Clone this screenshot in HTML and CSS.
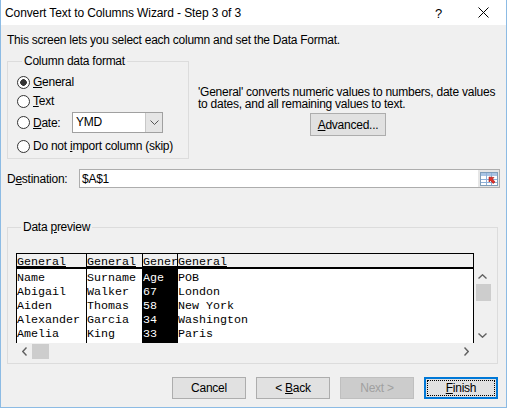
FILE: index.html
```html
<!DOCTYPE html>
<html lang="en">
<head>
  <meta charset="UTF-8" />
  <title>Convert Text to Columns Wizard - Step 3 of 3</title>
  <link rel="stylesheet" href="styles.css">
</head>
<body>
<div class="window">

  <!-- Title bar -->
  <div class="titlebar">
    <span class="title">Convert Text to Columns Wizard - Step 3 of 3</span>
    <span class="caption-btn help">?</span>
    <span class="caption-btn">
      <svg width="11" height="11" viewBox="0 0 11 11"><path d="M0.5 0.5 L10.5 10.5 M10.5 0.5 L0.5 10.5" stroke="#000" stroke-width="1" fill="none"/></svg>
    </span>
  </div>

  <div class="content">
    <p class="intro">This screen lets you select each column and set the Data Format.</p>

    <!-- Column data format -->
    <div class="format-row">
      <fieldset class="group format-group">
        <legend>Column data format</legend>
        <div class="opt"><span class="radio checked"></span><span><u>G</u>eneral</span></div>
        <div class="opt opt-text"><span class="radio"></span><span><u>T</u>ext</span></div>
        <div class="opt opt-date">
          <span class="radio"></span>
          <span class="date-label"><u>D</u>ate:</span>
          <div class="combo">
            <span class="combo-value">YMD</span>
            <span class="combo-btn">
              <svg width="9" height="5" viewBox="0 0 9 5"><polyline points="0.5,0.5 4.5,4.5 8.5,0.5" stroke="#555" stroke-width="1" fill="none"/></svg>
            </span>
          </div>
        </div>
        <div class="opt opt-skip"><span class="radio"></span><span>Do not <u>i</u>mport column (skip)</span></div>
      </fieldset>

      <div class="format-help">
        <p>'General' converts numeric values to numbers, date values<br>to dates, and all remaining values to text.</p>
        <button class="btn btn-advanced"><u>A</u>dvanced...</button>
      </div>
    </div>

    <!-- Destination -->
    <div class="dest-row">
      <span class="dest-label">D<u>e</u>stination:</span>
      <div class="dest-input">
        <span class="dest-value">$A$1</span>
        <span class="ref-btn">
          <svg width="18" height="14" viewBox="0 0 18 14">
            <rect x="0.5" y="0.5" width="17" height="13" fill="#fff" stroke="#7f9db9"/>
            <rect x="1" y="1" width="16" height="3" fill="#a9c4e4"/>
            <path d="M1 7.5 H17 M1 10.5 H17 M6.5 1 V13 M11.5 1 V13" stroke="#8fb0d8" stroke-width="1"/>
            <path d="M9 5 L9 10 L10.5 8.5 L13 11.5 L15 10 L12.5 7 L14 5.5 Z" fill="#e0302a" stroke="#a01810" stroke-width="0.6"/>
          </svg>
        </span>
      </div>
    </div>

    <!-- Data preview -->
    <fieldset class="group preview-group">
      <legend>Data <u>p</u>review</legend>
      <div class="preview">
        <div class="ptable">
          <div class="pcol col-1">
            <div class="phead"><u>General</u></div>
            <div class="pbody">
              <div>Name</div><div>Abigail</div><div>Aiden</div><div>Alexander</div><div>Amelia</div>
            </div>
          </div>
          <div class="pcol col-2">
            <div class="phead"><u>General</u></div>
            <div class="pbody">
              <div>Surname</div><div>Walker</div><div>Thomas</div><div>Garcia</div><div>King</div>
            </div>
          </div>
          <div class="pcol col-3 selected">
            <div class="phead"><u>Gener</u></div>
            <div class="pbody">
              <div>Age</div><div>67</div><div>58</div><div>34</div><div>33</div>
            </div>
          </div>
          <div class="pcol col-4">
            <div class="phead"><u>General</u></div>
            <div class="pbody">
              <div>POB</div><div>London</div><div>New York</div><div>Washington</div><div>Paris</div>
            </div>
          </div>
        </div>

        <div class="vscroll">
          <span class="arrow">
            <svg width="9" height="5" viewBox="0 0 9 5"><polyline points="0.5,4.5 4.5,0.8 8.5,4.5" stroke="#606060" stroke-width="1.4" fill="none"/></svg>
          </span>
          <span class="thumb"></span>
          <span class="track"></span>
          <span class="arrow">
            <svg width="9" height="5" viewBox="0 0 9 5"><polyline points="0.5,0.5 4.5,4.2 8.5,0.5" stroke="#606060" stroke-width="1.4" fill="none"/></svg>
          </span>
        </div>

        <div class="hscroll">
          <span class="arrow">
            <svg width="5" height="9" viewBox="0 0 5 9"><polyline points="4.5,0.5 0.8,4.5 4.5,8.5" stroke="#606060" stroke-width="1.4" fill="none"/></svg>
          </span>
          <span class="thumb"></span>
          <span class="track"></span>
          <span class="arrow">
            <svg width="5" height="9" viewBox="0 0 5 9"><polyline points="0.5,0.5 4.2,4.5 0.5,8.5" stroke="#606060" stroke-width="1.4" fill="none"/></svg>
          </span>
        </div>
      </div>
    </fieldset>

    <!-- Wizard buttons -->
    <div class="buttons">
      <button class="btn">Cancel</button>
      <button class="btn">&lt; <u>B</u>ack</button>
      <button class="btn" disabled>Next &gt;</button>
      <button class="btn btn-default"><u>F</u>inish</button>
    </div>
  </div>
</div>
</body>
</html>
```

FILE: styles.css
```css
* { box-sizing: border-box; }
body {
  margin: 0;
  font-family: 'Liberation Sans', Arial, sans-serif;
  font-size: 12px;
  letter-spacing: -0.25px;
  color: #000;
  background: #f0f0f0;
}
p { margin: 0; }

.window {
  width: 507px;
  height: 408px;
  border: 1px solid #8cbbe4;
  border-top: none;
  background: #f0f0f0;
}

/* title bar */
.titlebar {
  height: 25px;
  background: #fff;
  display: flex;
  align-items: center;
  padding-left: 4px;
}
.title { flex: 1; letter-spacing: -0.1px; }
.caption-btn {
  width: 45px;
  height: 25px;
  display: flex;
  align-items: center;
  justify-content: center;
}
.help { font-size: 13px; padding-top: 1px; }

.content { padding: 0 8px 0 6px; }
.intro { margin-top: 7px; line-height: 16px; }

/* group boxes */
.group {
  margin: 0;
  border: 1px solid #dcdcdc;
  min-width: 0;
}
.group legend {
  padding: 0 2px;
  margin-left: 5px;
  line-height: 16px;
}

.format-row { display: flex; margin-top: 5px; }
.format-group {
  width: 182px;
  padding: 5px 0 4px 9px;
}
.opt {
  display: flex;
  align-items: center;
  height: 16px;
  line-height: 16px;
  white-space: nowrap;
}
.opt-text, .opt-date { margin-top: 3px; }
.opt-date { height: 21px; }
.opt-skip { margin-top: 5px; }
.radio {
  width: 13px;
  height: 13px;
  border: 1px solid #333;
  border-radius: 50%;
  background: #fff;
  margin-right: 3px;
  flex-shrink: 0;
}
.radio.checked { background: radial-gradient(circle, #333 0 3px, #fff 3.6px); }
.date-label { width: 39px; }
.combo {
  width: 91px;
  height: 21px;
  display: flex;
  border: 1px solid #a0a0a0;
  background: #fff;
}
.combo-value { flex: 1; padding-left: 3px; line-height: 19px; }
.combo-btn {
  width: 17px;
  background: #e5e5e5;
  border-left: 1px solid #c8c8c8;
  display: flex;
  align-items: center;
  justify-content: center;
}

.format-help {
  flex: 1;
  margin-left: 9px;
  margin-top: 33px;
  display: flex;
  flex-direction: column;
  align-items: center;
}
.format-help p { line-height: 12px; align-self: flex-start; white-space: nowrap; }

.btn {
  width: 74px;
  height: 22px;
  padding: 0;
  font: inherit;
  letter-spacing: inherit;
  color: #000;
  background: #e1e1e1;
  border: 1px solid #adadad;
}
.btn-advanced { width: 76px; height: 23px; margin-top: 3px; }
.btn:disabled { background: #cccccc; border-color: #bfbfbf; color: #a0a0a0; }
.btn-default {
  border: 2px solid #0078d7;
  outline: 1px dotted #000;
  outline-offset: -4px;
}

/* destination */
.dest-row {
  display: flex;
  align-items: center;
  margin-top: 10px;
  margin-right: -2px;
}
.dest-label { width: 72px; }
.dest-input {
  flex: 1;
  height: 19px;
  display: flex;
  align-items: center;
  border: 1px solid #adadad;
  background: #fff;
}
.dest-value { flex: 1; padding-left: 2px; }
.ref-btn {
  width: 21px;
  height: 17px;
  display: flex;
  align-items: center;
  justify-content: center;
  background: #e6e6e6;
}

/* data preview */
.preview-group {
  margin-top: 31px;
  padding: 0 6px 4px 8px;
}
.preview {
  display: grid;
  grid-template-columns: 458px 17px;
  grid-template-rows: 90px 16px;
  margin-top: 18px;
}
.ptable {
  display: flex;
  border: 1px solid #000;
  border-bottom: none;
  background: #fff;
  font-family: 'Liberation Mono', 'Courier New', monospace;
  font-size: 11.67px;
  letter-spacing: 0;
}
.pcol {
  display: flex;
  flex-direction: column;
  border-left: 1px solid #000;
  white-space: nowrap;
  overflow: hidden;
}
.col-1 { width: 69px; border-left: none; }
.col-2 { width: 56px; }
.col-3 { width: 35px; }
.col-4 { flex: 1; }
.phead {
  height: 15px;
  line-height: 14px;
  padding-top: 1px;
  background: #f0f0f0;
  border-bottom: 2px solid #000;
}
.pbody { flex: 1; padding-top: 2px; line-height: 14px; }
.selected .pbody { background: #000; color: #fff; }

.vscroll {
  margin-top: 16px;
  display: flex;
  flex-direction: column;
  align-items: center;
}
.vscroll .arrow { height: 15px; display: flex; align-items: center; }
.vscroll .thumb { width: 15px; height: 17px; margin-left: 1px; background: #cdcdcd; }
.vscroll .track { flex: 1; }

.hscroll { display: flex; align-items: center; }
.hscroll .arrow { width: 16px; display: flex; justify-content: center; }
.hscroll .thumb { width: 17px; height: 15px; margin-top: 1px; background: #cdcdcd; }
.hscroll .track { flex: 1; }

.buttons {
  display: flex;
  justify-content: flex-end;
  gap: 10px;
  margin-top: 13px;
}
```
